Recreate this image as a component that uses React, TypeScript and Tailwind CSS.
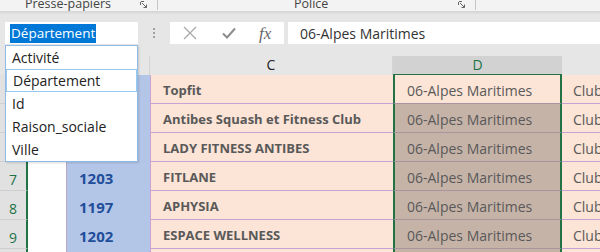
import React from "react";

const rows = [
  { n: "", id: "", name: "Topfit", active: true },
  { n: "", id: "", name: "Antibes Squash et Fitness Club" },
  { n: "", id: "", name: "LADY FITNESS ANTIBES" },
  { n: "7", id: "1203", name: "FITLANE" },
  { n: "8", id: "1197", name: "APHYSIA" },
  { n: "9", id: "1202", name: "ESPACE WELLNESS" },
  { n: "10", id: "", name: "" },
];

const fields = ["Activité", "Département", "Id", "Raison_sociale", "Ville"];

const cols = "grid grid-cols-[28px_39px_83px_243px_169px_1fr]";

function Launcher() {
  return (
    <svg width="8" height="8" viewBox="0 0 8 8" className="mt-[1px] mr-[9px] text-[#666]">
      <path d="M1 0.5h3M0.5 1v3M2 2l4.5 4.5M3.5 6.5h3v-3" stroke="currentColor" fill="none" strokeWidth="1" />
    </svg>
  );
}

export default function App() {
  return (
    <div className="relative h-[252px] w-[600px] overflow-hidden bg-[#e6e6e6] font-['Open_Sans',sans-serif]">
      {/* ribbon group labels */}
      <div className="flex h-[12px] overflow-hidden border-b border-[#d6d6d6] bg-[#f3f3f3] shadow-[0_1px_2px_rgba(0,0,0,0.08)]">
        <div className="flex w-[158px] items-start">
          <span className="mt-[-5px] flex-1 pl-[4px] pr-[8px] text-center text-[12.5px] leading-[18px] text-[#444]">Presse-papiers</span>
          <Launcher />
          <div className="h-[10px] w-px bg-[#c6c6c6]" />
        </div>
        <div className="flex w-[318px] items-start">
          <span className="mt-[-5px] ml-[136px] flex-1 text-[12.5px] leading-[18px] text-[#444]">Police</span>
          <Launcher />
          <div className="h-[10px] w-px bg-[#c6c6c6]" />
        </div>
      </div>

      {/* formula bar */}
      <div className="flex h-[44px] items-start pt-[10px]">
        <div className="ml-[5px] flex h-[22px] w-[133px] items-center bg-white pl-[5px]">
          <span className="bg-[#0078d7] px-[1px] text-[13.5px] leading-[19px] text-white">Département</span>
        </div>
        <div className="flex w-[32px] flex-col items-center gap-[2px] pt-[6px]">
          <div className="h-[2px] w-[2px] rounded-full bg-[#8a8a8a]" />
          <div className="h-[2px] w-[2px] rounded-full bg-[#8a8a8a]" />
          <div className="h-[2px] w-[2px] rounded-full bg-[#8a8a8a]" />
        </div>
        <div className="flex h-[22px] w-[114px] items-center bg-white">
          <svg width="14" height="14" viewBox="0 0 14 14" className="ml-[13px]">
            <path d="M1 1l12 12M13 1L1 13" stroke="#a8a8a8" strokeWidth="1.2" fill="none" />
          </svg>
          <svg width="14" height="12" viewBox="0 0 14 12" className="ml-[25px]">
            <path d="M1 6.5l4 4L13 1.5" stroke="#8c8c8c" strokeWidth="2" fill="none" />
          </svg>
          <span className="ml-[23px] font-['Liberation_Serif',serif] text-[17px] italic leading-none text-[#666]">fx</span>
        </div>
        <div className="ml-[4px] flex h-[22px] flex-1 items-center bg-white pl-[12px] text-[14px] text-[#333]">
          06-Alpes Maritimes
        </div>
      </div>

      {/* column headers */}
      <div className={`${cols} h-[19px] text-[14px] leading-[18px]`}>
        <div className="border-r border-[#d4d4d4]" />
        <div className="border-r border-[#d4d4d4]" />
        <div className="border-r border-[#d4d4d4]" />
        <div className="border-r border-[#d4d4d4] text-center text-[#222]">C</div>
        <div className="border-b-2 border-[#217346] bg-[#d2d2d2] text-center text-[#217346]">D</div>
        <div />
      </div>

      {/* rows */}
      {rows.map((r, i) => (
        <div key={i} className={`${cols} h-[29px] text-[14px]`}>
          <div className="flex items-center justify-center border-b border-r-2 border-b-[#cfcfcf] border-r-[#217346] bg-[#e1e1e1] pt-[6px] text-[#217346]">
            {r.n}
          </div>
          <div className="border-r border-[#b9abc6] bg-white" />
          <div className="flex items-center bg-[#b4c6e7] pt-[3px] pl-[12px] text-[15px] font-bold text-[#1f4e9a]">{r.id}</div>
          <div className="flex items-center border-b border-l border-[#c9a3d4] bg-[#fce4d6] pt-[4px] pl-[12px] text-[13px] font-bold text-[#595959]">
            {r.name}
          </div>
          <div
            className={`flex items-center border-x-2 border-b border-x-[#217346] border-b-[#a9939f] pt-[3px] pl-[12px] text-[#595959] ${
              r.active ? "bg-[#fce4d6]" : "bg-[#c6b3a8]"
            }`}
          >
            {r.name ? "06-Alpes Maritimes" : ""}
          </div>
          <div className="flex items-center border-b border-[#c9a3d4] bg-[#fce4d6] pt-[3px] pl-[11px] text-[#595959]">
            {r.name ? "Club" : ""}
          </div>
        </div>
      ))}

      {/* field list dropdown */}
      <div className="absolute top-[45px] left-[5px] w-[133px] border border-[#8fbbe6] bg-white text-[14px] text-[#222] shadow-[1px_1px_2px_rgba(0,0,0,0.15)]">
        {fields.map((f) => (
          <div
            key={f}
            className={`flex h-[23px] items-center pl-[6px] ${
              f === "Département" ? "border border-[#99c9ef] pl-[5px]" : ""
            }`}
          >
            {f}
          </div>
        ))}
      </div>
    </div>
  );
}
